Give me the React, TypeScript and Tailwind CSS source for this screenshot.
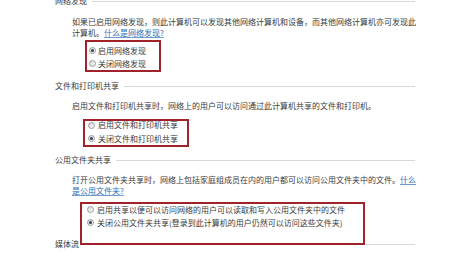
import React from "react";

const Radio = ({ checked }: { checked?: boolean }) => (
  <span className="flex h-[7px] w-[7px] shrink-0 items-center justify-center rounded-full border border-[#9a9b9b] bg-gradient-to-br from-[#d4d4d4] to-[#fbfbfb]">
    {checked && <span className="h-[3px] w-[3px] rounded-full bg-[#2a4563]" />}
  </span>
);

const Header = ({ children, className = "" }: { children: React.ReactNode; className?: string }) => (
  <div className={`flex h-[12px] items-center gap-[5px] leading-[12px] ${className}`}>
    <span className="shrink-0">{children}</span>
    <div className="h-px flex-1 bg-[#d9d9d9]" />
  </div>
);

const Link = ({ children }: { children: React.ReactNode }) => (
  <span className="text-[#2f6db3] underline decoration-[#6f9bd0]">{children}</span>
);

export default function App() {
  return (
    <div className="h-[255px] w-[450px] overflow-hidden bg-white font-['Noto_Sans_CJK_SC','Noto_Sans',sans-serif] text-[8px] text-[#3a3a3a]">
      <div className="-mt-[5px] pl-[55px] pr-[35px]">
        <Header>网络发现</Header>
        <div className="ml-[17px] mt-[9px] whitespace-nowrap leading-[11px]">
          <div>如果已启用网络发现，则此计算机可以发现其他网络计算机和设备，而其他网络计算机亦可发现此</div>
          <div>
            计算机。<Link>什么是网络发现?</Link>
          </div>
        </div>
        <div className="ml-[30px] mt-[2px] w-[76px] border-2 border-[#a0232c] bg-white pl-[2px] pt-[2px]">
          <div className="flex h-[13px] items-center gap-[2px] leading-[13px]">
            <Radio checked />
            <span>启用网络发现</span>
          </div>
          <div className="flex h-[13px] items-center gap-[2px] leading-[13px]">
            <Radio />
            <span>关闭网络发现</span>
          </div>
        </div>

        <Header className="mt-[8px]">文件和打印机共享</Header>
        <div className="ml-[17px] mt-[8px] whitespace-nowrap leading-[11px]">
          启用文件和打印机共享时，网络上的用户可以访问通过此计算机共享的文件和打印机。
        </div>
        <div className="ml-[28px] mt-[8px] h-[28px] w-[106px] border-2 border-[#a0232c] bg-white pl-[3px]">
          <div className="-mt-[3px]">
            <div className="flex h-[14px] items-center gap-[3px] leading-[14px]">
              <Radio />
              <span>启用文件和打印机共享</span>
            </div>
            <div className="flex h-[13px] items-center gap-[3px] leading-[13px]">
              <Radio checked />
              <span>关闭文件和打印机共享</span>
            </div>
          </div>
        </div>

        <Header className="mt-[7px]">公用文件夹共享</Header>
        <div className="ml-[17px] mt-[8px] whitespace-nowrap leading-[11px]">
          <div>
            打开公用文件夹共享时，网络上包括家庭组成员在内的用户都可以访问公用文件夹中的文件。<Link>什么</Link>
          </div>
          <div>
            <Link>是公用文件夹?</Link>
          </div>
        </div>
        <div className="relative z-10 ml-[25px] mt-[6px] h-[43px] w-[285px] border-2 border-[#a0232c] bg-white pl-[5px]">
          <div className="-mt-[1px]">
            <div className="flex h-[13px] items-center gap-[3px] leading-[13px]">
              <Radio />
              <span>启用共享以便可以访问网络的用户可以读取和写入公用文件夹中的文件</span>
            </div>
            <div className="flex h-[13px] items-center gap-[3px] leading-[13px]">
              <Radio checked />
              <span>关闭公用文件夹共享(登录到此计算机的用户仍然可以访问这些文件夹)</span>
            </div>
          </div>
        </div>

        <Header className="-mt-[7px]">媒体流</Header>
      </div>
    </div>
  );
}
